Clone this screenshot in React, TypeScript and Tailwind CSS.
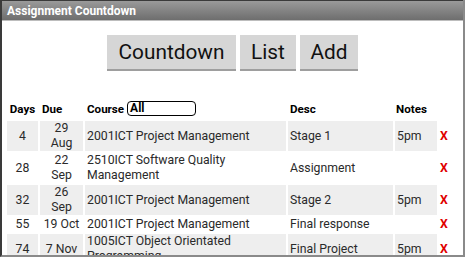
import React from "react";

type Row = { days: string; due: React.ReactNode; course: string; desc: string; notes: string };

const rows: Row[] = [
  { days: "4", due: <>29<br />Aug</>, course: "2001ICT Project Management", desc: "Stage 1", notes: "5pm" },
  { days: "28", due: <>22<br />Sep</>, course: "2510ICT Software Quality Management", desc: "Assignment", notes: "" },
  { days: "32", due: <>26<br />Sep</>, course: "2001ICT Project Management", desc: "Stage 2", notes: "5pm" },
  { days: "55", due: "19 Oct", course: "2001ICT Project Management", desc: "Final response", notes: "" },
  { days: "74", due: "7 Nov", course: "1005ICT Object Orientated Programming", desc: "Final Project", notes: "5pm" },
];

export default function App() {
  return (
    <div
      className="w-[465px] h-[257px] overflow-hidden bg-white flex flex-col border-l-2 border-l-[#3a3a3a] border-r-2 border-r-[#8a8a8a] border-b-2 border-b-[#8a8a8a]"
      style={{ fontFamily: "Roboto, 'Liberation Sans', sans-serif" }}
    >
      <div className="h-[21px] shrink-0 bg-gradient-to-b from-[#9a9a9a] to-[#6e6e6e] border-t border-t-[#3a3a3a] border-b border-b-[#bdbdbd] flex items-center pl-[5px] text-white font-bold text-[12px] leading-none">
        Assignment Countdown
      </div>
      <div className="flex justify-center gap-[4px] mt-[14px]">
        <button className="h-[36px] w-[129px] bg-[#d6d6d6] border-b-2 border-b-[#9e9e9e] text-[20.8px] text-[#111] leading-none">
          Countdown
        </button>
        <button className="h-[36px] w-[56px] bg-[#d6d6d6] border-b-2 border-b-[#9e9e9e] text-[20.8px] text-[#111] leading-none">
          List
        </button>
        <button className="h-[36px] w-[58px] bg-[#d6d6d6] border-b-2 border-b-[#9e9e9e] text-[20.8px] text-[#111] leading-none">
          Add
        </button>
      </div>
      <table className="ml-[3px] mt-[28px] border-separate border-spacing-[2px] text-[12.25px] leading-[15px] text-[#2a2a2a] table-fixed w-[456px]">
        <colgroup>
          <col className="w-[31px]" />
          <col className="w-[43px]" />
          <col className="w-[201px]" />
          <col className="w-[105px]" />
          <col className="w-[42px]" />
          <col />
        </colgroup>
        <thead>
          <tr className="text-[11.6px] leading-[14px] font-bold text-black">
            <th className="text-center font-bold pb-[3px]">Days</th>
            <th className="text-left font-bold pl-[2px] pb-[3px]">Due</th>
            <th className="text-left font-bold pl-[2px] pb-[3px]">
              <span className="inline-flex items-center gap-[3px]">
                Course
                <span className="inline-block w-[69px] h-[15px] border border-black rounded-[4px] text-left pl-[2px] leading-[13px] text-[12px] font-bold">
                  All
                </span>
              </span>
            </th>
            <th className="text-left font-bold pl-[2px] pb-[3px]">Desc</th>
            <th className="text-left font-bold pl-[1px] pb-[3px]">Notes</th>
            <th />
          </tr>
        </thead>
        <tbody>
          {rows.map((r, i) => {
            const bg = i % 2 === 0 ? "bg-[#eeeeee]" : "bg-white";
            return (
              <tr key={i}>
                <td className={`${bg} text-center`}>{r.days}</td>
                <td className={`${bg} text-center`}>{r.due}</td>
                <td className={`${bg} pl-[2px]`}>{r.course}</td>
                <td className={`${bg} pl-[2px]`}>{r.desc}</td>
                <td className={`${bg} pl-[2px]`}>{r.notes}</td>
                <td className="pl-[1px] text-[#e00000] font-bold">X</td>
              </tr>
            );
          })}
        </tbody>
      </table>
    </div>
  );
}
